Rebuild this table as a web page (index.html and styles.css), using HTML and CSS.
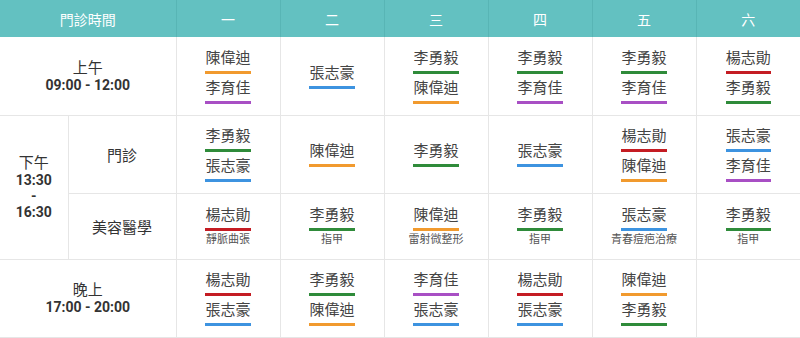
FILE: index.html
```html
<!DOCTYPE html>
<html lang="zh-Hant">
<head>
    <meta charset="UTF-8">
    <meta name="viewport" content="width=device-width, initial-scale=1.0">
    <title>門診時間表</title>
    <link rel="stylesheet" href="styles.css">
</head>
<body>
    <table class="schedule">
        <colgroup>
            <col class="col-period">
            <col class="col-type">
            <col class="col-day">
            <col class="col-day">
            <col class="col-day">
            <col class="col-day">
            <col class="col-day">
            <col class="col-day">
        </colgroup>
        <thead>
            <tr>
                <th colspan="2">門診時間</th>
                <th>一</th>
                <th>二</th>
                <th>三</th>
                <th>四</th>
                <th>五</th>
                <th>六</th>
            </tr>
        </thead>
        <tbody>
            <!-- 上午 -->
            <tr class="row-clinic">
                <td colspan="2" class="period">上午<span class="time">09:00 - 12:00</span></td>
                <td><div class="docs"><span class="doc orange">陳偉迪</span><span class="doc purple">李育佳</span></div></td>
                <td><div class="docs"><span class="doc blue">張志豪</span></div></td>
                <td><div class="docs"><span class="doc green">李勇毅</span><span class="doc orange">陳偉迪</span></div></td>
                <td><div class="docs"><span class="doc green">李勇毅</span><span class="doc purple">李育佳</span></div></td>
                <td><div class="docs"><span class="doc green">李勇毅</span><span class="doc purple">李育佳</span></div></td>
                <td><div class="docs"><span class="doc red">楊志勛</span><span class="doc green">李勇毅</span></div></td>
            </tr>
            <!-- 下午 門診 -->
            <tr class="row-clinic">
                <td rowspan="2" class="period">下午<span class="time">13:30</span><span class="time">-</span><span class="time">16:30</span></td>
                <td class="type">門診</td>
                <td><div class="docs"><span class="doc green">李勇毅</span><span class="doc blue">張志豪</span></div></td>
                <td><div class="docs"><span class="doc orange">陳偉迪</span></div></td>
                <td><div class="docs"><span class="doc green">李勇毅</span></div></td>
                <td><div class="docs"><span class="doc blue">張志豪</span></div></td>
                <td><div class="docs"><span class="doc red">楊志勛</span><span class="doc orange">陳偉迪</span></div></td>
                <td><div class="docs"><span class="doc blue">張志豪</span><span class="doc purple">李育佳</span></div></td>
            </tr>
            <!-- 下午 美容醫學 -->
            <tr class="row-beauty">
                <td class="type">美容醫學</td>
                <td><div class="docs"><span class="doc red">楊志勛</span><span class="note">靜脈曲張</span></div></td>
                <td><div class="docs"><span class="doc green">李勇毅</span><span class="note">指甲</span></div></td>
                <td><div class="docs"><span class="doc orange">陳偉迪</span><span class="note">雷射微整形</span></div></td>
                <td><div class="docs"><span class="doc green">李勇毅</span><span class="note">指甲</span></div></td>
                <td><div class="docs"><span class="doc blue">張志豪</span><span class="note">青春痘疤治療</span></div></td>
                <td><div class="docs"><span class="doc green">李勇毅</span><span class="note">指甲</span></div></td>
            </tr>
            <!-- 晚上 -->
            <tr class="row-clinic">
                <td colspan="2" class="period">晚上<span class="time">17:00 - 20:00</span></td>
                <td><div class="docs"><span class="doc red">楊志勛</span><span class="doc blue">張志豪</span></div></td>
                <td><div class="docs"><span class="doc green">李勇毅</span><span class="doc orange">陳偉迪</span></div></td>
                <td><div class="docs"><span class="doc purple">李育佳</span><span class="doc blue">張志豪</span></div></td>
                <td><div class="docs"><span class="doc red">楊志勛</span><span class="doc blue">張志豪</span></div></td>
                <td><div class="docs"><span class="doc orange">陳偉迪</span><span class="doc green">李勇毅</span></div></td>
                <td></td>
            </tr>
        </tbody>
    </table>
</body>
</html>
```

FILE: styles.css
```css
:root {
    --teal: #63c1c1;
    --teal-line: #58b5b5;
    --grid: #e6e6e6;
    --text: #444444;
    --orange: #f19a2e;
    --purple: #a84fc4;
    --green: #2f8b3a;
    --blue: #3d93e0;
    --red: #c41c23;
}

body {
    margin: 0;
    font-family: Roboto, "Noto Sans CJK TC", sans-serif;
    color: var(--text);
    background: #ffffff;
}

.schedule {
    width: 800px;
    table-layout: fixed;
    border-collapse: collapse;
}

.col-period { width: 68px; }
.col-type { width: 108px; }
.col-day { width: 104px; }

th, td {
    padding: 0;
    text-align: center;
    vertical-align: middle;
    border-right: 1px solid var(--grid);
    border-bottom: 1px solid var(--grid);
}

th:last-child, td:last-child {
    border-right: none;
}

thead tr {
    height: 37px;
}

th {
    background-color: var(--teal);
    color: #ffffff;
    font-size: 14px;
    font-weight: normal;
    border-right-color: var(--teal-line);
    border-bottom: none;
}

.row-clinic { height: 78px; }
.row-beauty { height: 66px; }

.period {
    font-size: 15px;
    line-height: 18px;
    color: #333333;
}

.time {
    display: block;
    font-size: 14px;
    font-weight: bold;
    line-height: 16px;
}

.type {
    font-size: 15px;
    color: #333333;
}

.docs {
    display: flex;
    flex-direction: column;
    align-items: center;
    gap: 4px;
}

.doc {
    font-size: 15px;
    line-height: 20px;
    padding-bottom: 3px;
    border-bottom: 3px solid;
    color: var(--text);
}

.doc.orange { border-color: var(--orange); }
.doc.purple { border-color: var(--purple); }
.doc.green { border-color: var(--green); }
.doc.blue { border-color: var(--blue); }
.doc.red { border-color: var(--red); }

.note {
    font-size: 11px;
    line-height: 14px;
    margin-top: -2px;
    color: #555555;
}
```
